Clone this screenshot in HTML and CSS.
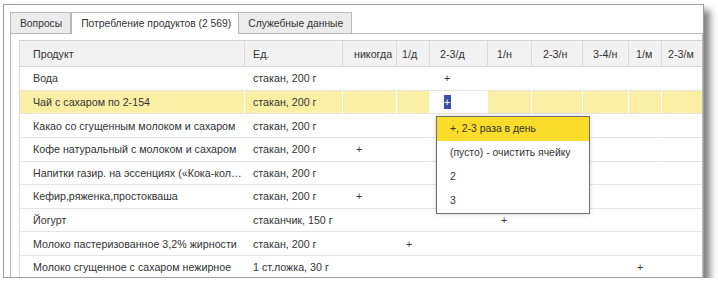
FILE: index.html
```html
<!DOCTYPE html>
<html>
  <head>
    <meta charset="utf-8">
    <title>Потребление продуктов</title>
    <link rel="stylesheet" href="styles.css">
  </head>
  <body>
    <div class="window">
      <div class="tabs">
        <div class="tab">Вопросы</div>
        <div class="tab active">Потребление продуктов (2 569)</div>
        <div class="tab">Служебные данные</div>
      </div>
      <div class="panel">
        <table class="grid">
          <colgroup>
            <col class="w-prod">
            <col class="w-unit">
            <col class="w-never">
            <col class="w-1d">
            <col class="w-23d">
            <col class="w-1w">
            <col class="w-23w">
            <col class="w-34w">
            <col class="w-1m">
            <col class="w-23m">
          </colgroup>
          <thead>
            <tr>
              <th>Продукт</th>
              <th>Ед.</th>
              <th>никогда</th>
              <th>1/д</th>
              <th>2-3/д</th>
              <th>1/н</th>
              <th>2-3/н</th>
              <th>3-4/н</th>
              <th>1/м</th>
              <th>2-3/м</th>
            </tr>
          </thead>
          <tbody>
            <tr>
              <td>Вода</td><td>стакан, 200 г</td>
              <td></td><td></td><td>+</td><td></td><td></td><td></td><td></td><td></td>
            </tr>
            <tr class="current">
              <td>Чай с сахаром по 2-154</td><td>стакан, 200 г</td>
              <td></td><td></td><td class="editing"><span class="sel">+</span></td><td></td><td></td><td></td><td></td><td></td>
            </tr>
            <tr>
              <td>Какао со сгущенным молоком и сахаром</td><td>стакан, 200 г</td>
              <td></td><td></td><td></td><td></td><td></td><td></td><td></td><td></td>
            </tr>
            <tr>
              <td>Кофе натуральный с молоком и сахаром</td><td>стакан, 200 г</td>
              <td>+</td><td></td><td></td><td></td><td></td><td></td><td></td><td></td>
            </tr>
            <tr>
              <td>Напитки газир. на эссенциях («Кока-кола», «Пепси-кола» и т.п.)</td><td>стакан, 200 г</td>
              <td></td><td></td><td></td><td></td><td></td><td></td><td></td><td></td>
            </tr>
            <tr>
              <td>Кефир,ряженка,простокваша</td><td>стакан, 200 г</td>
              <td>+</td><td></td><td></td><td></td><td></td><td></td><td></td><td></td>
            </tr>
            <tr>
              <td>Йогурт</td><td>стаканчик, 150 г</td>
              <td></td><td></td><td></td><td>+</td><td></td><td></td><td></td><td></td>
            </tr>
            <tr>
              <td>Молоко пастеризованное 3,2% жирности</td><td>стакан, 200 г</td>
              <td></td><td>+</td><td></td><td></td><td></td><td></td><td></td><td></td>
            </tr>
            <tr>
              <td>Молоко сгущенное с сахаром нежирное</td><td>1 ст.ложка, 30 г</td>
              <td></td><td></td><td></td><td></td><td></td><td></td><td>+</td><td></td>
            </tr>
          </tbody>
        </table>
      </div>
      <ul class="dropdown">
        <li class="hover">+, 2-3 раза в день</li>
        <li>(пусто) - очистить ячейку</li>
        <li>2</li>
        <li>3</li>
      </ul>
    </div>
  </body>
</html>
```

FILE: styles.css
```css
body {
  margin: 0;
  background: #fff;
  font-family: "Liberation Sans", Arial, sans-serif;
  font-size: 10.7px;
  color: #333;
}

.window {
  position: relative;
  display: flex;
  flex-direction: column;
  margin: 4px 0 0 3px;
  width: 699px;
  height: 272px;
  border: 1px solid #9e9e9e;
  background: #fff;
  box-shadow: 6px 6px 7px rgba(0, 0, 0, 0.5);
  overflow: hidden;
}

/* tabs */
.tabs {
  display: flex;
  padding: 7px 0 0 6px;
  font-size: 10.3px;
}
.tab {
  height: 20px;
  line-height: 21px;
  padding: 0 8px 0 9px;
  border: 1px solid #b9b9b9;
  border-bottom: none;
  background: #ececec;
  white-space: nowrap;
}
.tab.active {
  position: relative;
  z-index: 1;
  height: 21px;
  margin-bottom: -1px;
  padding: 0 7px 0 9px;
  background: #fff;
}
.tab.active + .tab {
  margin-left: -1px;
}

.panel {
  flex: 1;
  margin-left: 6px;
  padding: 6px 0 0 8px;
  border: 1px solid #b9b9b9;
  border-bottom: none;
  overflow: hidden;
}

/* table */
.grid {
  table-layout: fixed;
  width: 693px;
  border-collapse: separate;
  border-spacing: 0;
}
.w-prod { width: 226px; }
.w-unit { width: 98px; }
.w-never { width: 54px; }
.w-1d { width: 33px; }
.w-23d { width: 58px; }
.w-1w { width: 44px; }
.w-23w { width: 51px; }
.w-34w { width: 46px; }
.w-1m { width: 33px; }
.w-23m { width: 50px; }

.grid th,
.grid td {
  padding: 0 0 0 8px;
  text-align: left;
  white-space: nowrap;
  overflow: hidden;
  text-overflow: ellipsis;
}
.grid th {
  height: 25px;
  font-weight: normal;
  background: #f2f2f2;
  border-top: 1px solid #d4d4d4;
  border-bottom: 1px solid #d4d4d4;
  border-right: 1px solid #dadada;
  text-overflow: clip;
}
.grid th:first-child,
.grid td:first-child {
  padding-left: 13px;
  border-left: 1px solid #dadada;
}
.grid th:nth-child(3) { padding-left: 11px; }
.grid th:nth-child(4) { padding-left: 5px; }
.grid th:nth-child(5) { padding-left: 10px; }
.grid th:nth-child(6) { padding-left: 9px; }
.grid th:nth-child(7) { padding-left: 11px; }
.grid th:nth-child(8) { padding-left: 10px; }
.grid th:nth-child(9) { padding-left: 7px; }
.grid th:nth-child(10) { padding-left: 6px; }

.grid tbody tr {
  height: 23.625px;
}
.grid td {
  border-bottom: 1px solid #e4e4e4;
  border-right: 1px solid transparent;
}
.grid td:first-child {
  padding-right: 1px;
}
.grid td:nth-child(3) { padding-left: 13px; }
.grid td:nth-child(4) { padding-left: 9px; }
.grid td:nth-child(5) { padding-left: 14px; }
.grid td:nth-child(6) { padding-left: 13px; }
.grid td:nth-child(9) { padding-left: 8px; }

.grid tr.current td {
  background: #fbefa6;
  border-right-color: #fff;
}
.grid tr.current td.editing {
  background: #fff;
}
.sel {
  display: inline-block;
  width: 7px;
  line-height: 14px;
  color: #fff;
  background: #3c4fab;
}

/* popup list */
.dropdown {
  position: absolute;
  left: 432px;
  top: 111px;
  width: 152px;
  margin: 0;
  padding: 0;
  list-style: none;
  font-size: 10.4px;
  background: #fff;
  border: 1px solid #707070;
  box-shadow: 0 0 4px rgba(0, 0, 0, 0.2);
}
.dropdown li {
  height: 24px;
  line-height: 24px;
  padding-left: 13px;
}
.dropdown li.hover {
  background: #fadc2b;
}
```
